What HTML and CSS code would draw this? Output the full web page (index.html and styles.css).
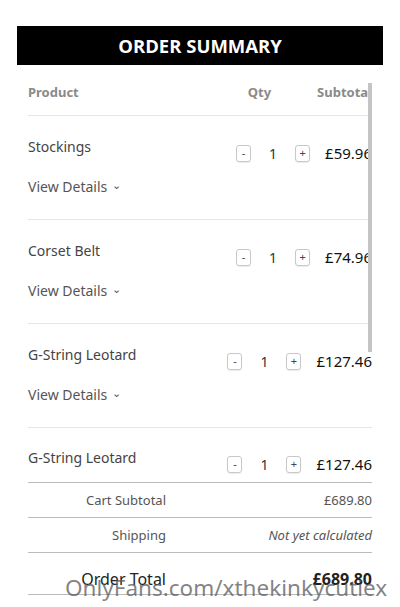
FILE: index.html
```html
<!DOCTYPE html>
<html>
<head>
<meta charset="utf-8">
<link rel="stylesheet" href="styles.css">
</head>
<body>
<div class="wrap">
  <div class="title">ORDER SUMMARY</div>
  <div class="table">
    <div class="thead">
      <span class="th-product">Product</span>
      <span class="th-qty">Qty</span>
      <span class="th-sub">Subtotal</span>
    </div>
    <div class="row">
      <div class="prod">
        <div class="name">Stockings</div>
        <div class="details">View Details <span class="chev">&#8964;</span></div>
      </div>
      <div class="right">
        <span class="qbtn">-</span><span class="qnum">1</span><span class="qbtn">+</span>
        <span class="price">£59.96</span>
      </div>
    </div>
    <div class="row">
      <div class="prod">
        <div class="name">Corset Belt</div>
        <div class="details">View Details <span class="chev">&#8964;</span></div>
      </div>
      <div class="right">
        <span class="qbtn">-</span><span class="qnum">1</span><span class="qbtn">+</span>
        <span class="price">£74.96</span>
      </div>
    </div>
    <div class="row">
      <div class="prod">
        <div class="name">G-String Leotard</div>
        <div class="details">View Details <span class="chev">&#8964;</span></div>
      </div>
      <div class="right">
        <span class="qbtn">-</span><span class="qnum">1</span><span class="qbtn">+</span>
        <span class="price">£127.46</span>
      </div>
    </div>
    <div class="row row-last">
      <div class="prod">
        <div class="name">G-String Leotard</div>
      </div>
      <div class="right">
        <span class="qbtn">-</span><span class="qnum">1</span><span class="qbtn">+</span>
        <span class="price">£127.46</span>
      </div>
    </div>
    <div class="totals">
      <div class="trow">
        <span class="tlabel">Cart Subtotal</span>
        <span class="tval">£689.80</span>
      </div>
      <div class="trow">
        <span class="tlabel">Shipping</span>
        <span class="tval italic">Not yet calculated</span>
      </div>
      <div class="trow total">
        <span class="tlabel">Order Total</span>
        <span class="tval">£689.80</span>
      </div>
    </div>
    <div class="scrollbar"></div>
  </div>
</div>
<div class="watermark">OnlyFans.com/xthekinkycutiex</div>
</body>
</html>
```

FILE: styles.css
```css
html, body {
  margin: 0;
  padding: 0;
  background: #fff;
  font-family: "Noto Sans", "Open Sans", sans-serif;
  color: #444;
}
.wrap {
  padding: 26px 17px 0;
}
.title {
  background: #000;
  color: #fff;
  height: 39px;
  line-height: 39px;
  text-align: center;
  font-family: "Open Sans", sans-serif;
  font-weight: 700;
  font-size: 18.5px;
}
.table {
  position: relative;
  padding: 0 11px;
}
.thead {
  display: flex;
  align-items: center;
  padding-top: 4px;
  box-sizing: border-box;
  border-bottom: 1px solid #e6e6e6;
  color: #8a8a8a;
  font-size: 13px;
  font-weight: 700;
  height: 51px;
}
.th-product { flex: 1; }
.th-qty { margin-right: 46px; }
.row {
  display: flex;
  justify-content: space-between;
  align-items: flex-start;
  padding: 20px 0 20px;
  border-bottom: 1px solid #e6e6e6;
}
.row-last {
  padding: 19px 0 7px;
  border-bottom: 1px solid #bbb;
}
.name {
  font-size: 14px;
  line-height: 22px;
  color: #444;
}
.details {
  margin-top: 18px;
  font-size: 14px;
  line-height: 22px;
  color: #555;
}
.chev {
  font-size: 11px;
  position: relative;
  top: -3px;
  margin-left: 1px;
}
.right {
  display: flex;
  align-items: center;
  margin-top: 6px;
  height: 22px;
}
.qbtn {
  width: 13px;
  height: 15px;
  border: 1px solid #c8c8c8;
  border-radius: 3px;
  font-size: 11px;
  line-height: 14px;
  text-align: center;
  color: #444;
  box-shadow: 0 1px 1px rgba(0,0,0,0.08);
}
.qnum {
  width: 44px;
  text-align: center;
  font-size: 14px;
  color: #333;
}
.price {
  margin-left: 15px;
  font-size: 15px;
  color: #111;
}
.trow {
  display: flex;
  align-items: center;
  height: 34px;
  border-bottom: 1px solid #bbb;
  font-size: 13px;
  color: #555;
}
.tlabel {
  width: 138px;
  text-align: right;
}
.tval {
  flex: 1;
  text-align: right;
}
.italic { font-style: italic; }
.trow.total {
  height: 31px;
  padding-top: 10px;
  font-size: 16px;
  color: #222;
}
.total .tval { font-weight: 700; }
.scrollbar {
  position: absolute;
  left: 351px;
  top: 18px;
  width: 4px;
  height: 269px;
  background: #c4c4c4;
}
.watermark {
  position: absolute;
  left: 65px;
  top: 572px;
  font-size: 22.5px;
  color: rgba(90, 90, 90, 0.75);
  white-space: nowrap;
}
```
